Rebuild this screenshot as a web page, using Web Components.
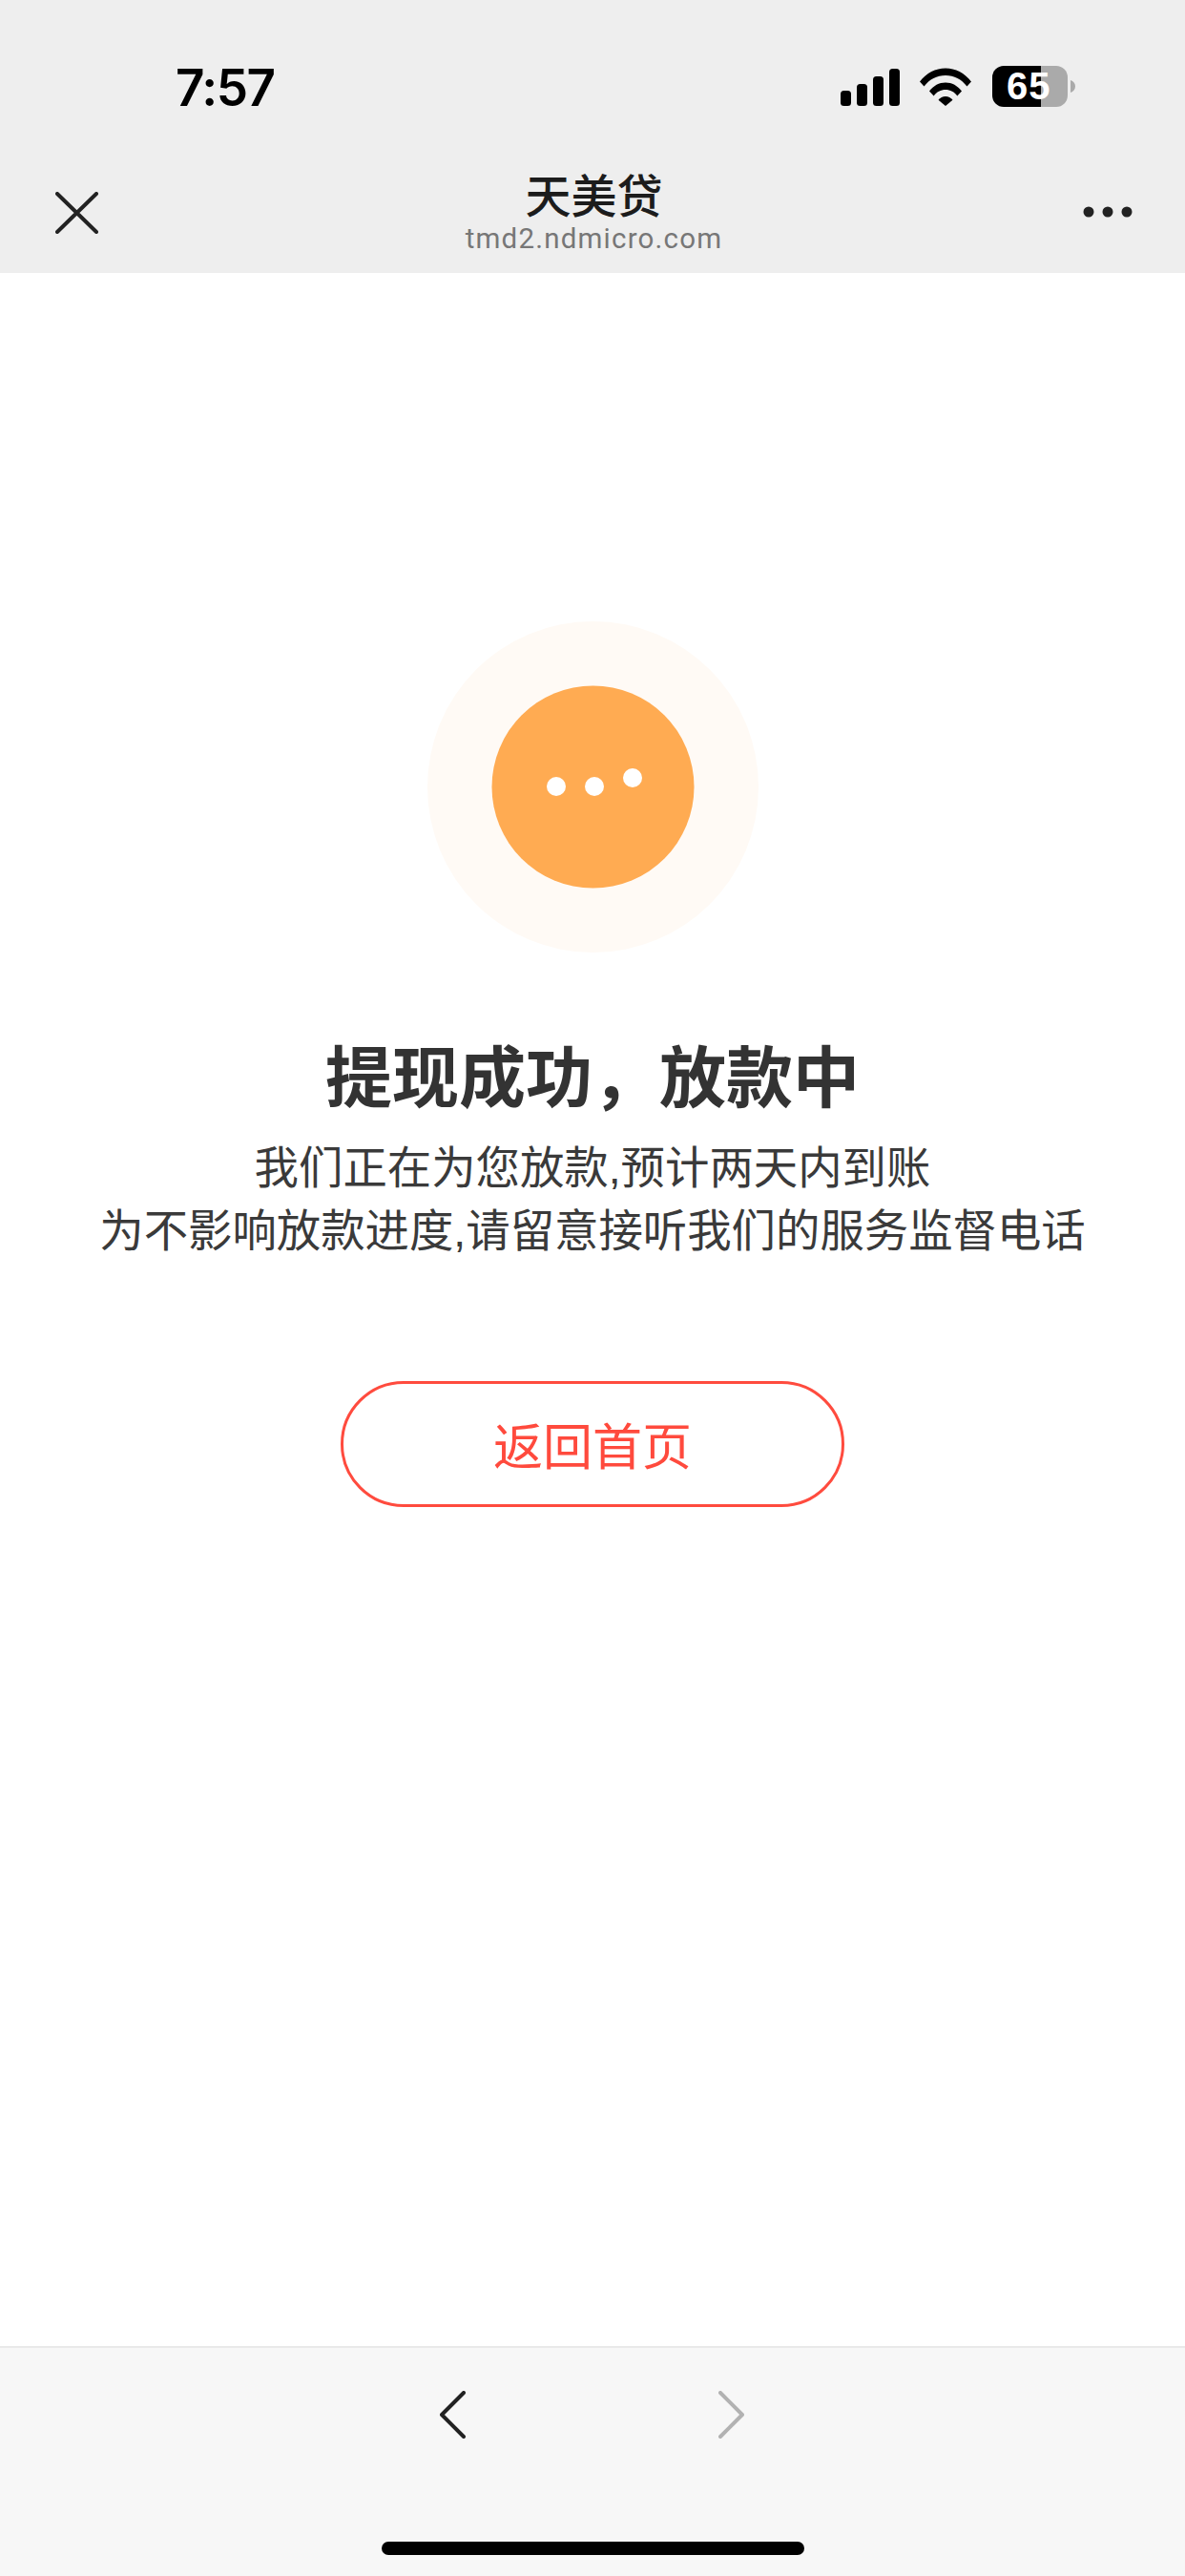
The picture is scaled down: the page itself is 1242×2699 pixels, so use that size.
<!DOCTYPE html>
<html lang="zh-CN">
<head>
<meta charset="utf-8">
<title>天美贷</title>
<style>
    html, body {
        margin: 0;
        padding: 0;
        background: #ffffff;
    }
    body {
        width: 1242px;
        height: 2699px;
        display: flex;
        flex-direction: column;
        font-family: "Liberation Sans", "Noto Sans CJK SC", sans-serif;
    }
</style>
</head>
<body>
<status-bar time="7:57" battery="65"></status-bar>
<web-nav title="天美贷" url="tmd2.ndmicro.com"></web-nav>
<result-page>
    <pending-badge></pending-badge>
    <span slot="title">提现成功&#xFF0C;放款中</span>
    <span slot="desc">我们正在为您放款,预计两天内到账</span>
    <span slot="desc">为不影响放款进度,请留意接听我们的服务监督电话</span>
    <outline-button slot="action">返回首页</outline-button>
</result-page>
<browser-toolbar></browser-toolbar>

<script>
class StatusBar extends HTMLElement {
    constructor() {
        super();
        this.attachShadow({ mode: 'open' });
    }

    connectedCallback() {
        this.render();
    }

    render() {
        const time = this.getAttribute('time');
        const battery = this.getAttribute('battery');

        this.shadowRoot.innerHTML = `
            <style>
                :host {
                    display: flex;
                    justify-content: space-between;
                    align-items: flex-start;
                    height: 150px;
                    box-sizing: border-box;
                    padding: 64px 115px 0 184px;
                    background: #eeeeee;
                }
                .time {
                    font: 600 53px/56px "Inter", "Liberation Sans", sans-serif;
                    letter-spacing: -1.5px;
                    color: #000000;
                }
                .icons {
                    display: flex;
                    align-items: flex-start;
                    margin-top: 5px;
                }
                .signal { margin: 3px 21px 0 0; }
                .wifi { margin: 2px 22px 0 0; }
                .battery {
                    width: 79px;
                    height: 43px;
                    border-radius: 12px;
                    background: linear-gradient(90deg, #000000 51px, #aaaaaa 51px);
                    color: #ffffff;
                    font: 700 40px/43px "Liberation Sans", sans-serif;
                    letter-spacing: 1px;
                    padding-left: 15px;
                    box-sizing: border-box;
                }
                .nub { margin: 15px 0 0 3px; }
            </style>
            <div class="time">${time}</div>
            <div class="icons">
                <svg class="signal" width="62" height="39" viewBox="0 0 62 39" fill="#000000">
                    <rect x="0" y="23" width="11" height="16" rx="3.5"/>
                    <rect x="17" y="16" width="11" height="23" rx="3.5"/>
                    <rect x="34" y="8" width="11" height="31" rx="3.5"/>
                    <rect x="51" y="0" width="11" height="39" rx="3.5"/>
                </svg>
                <svg class="wifi" width="54" height="40" viewBox="0 0 54 40" fill="#000000">
                    <path d="M0 14.500C7.200 5.400 16.500 0.500 27 0.500C37.500 0.500 46.800 5.400 54 14.500L49.500 19.500C43.800 12.100 36 8 27 8C18 8 10.200 12.100 4.500 19.500Z"/>
                    <path d="M10 24.500C14.300 18.800 20.300 15.500 27 15.500C33.700 15.500 39.700 18.800 44 24.500L39.300 29.400C36.300 25.400 32 23 27 23C22 23 17.700 25.400 14.700 29.400Z"/>
                    <path d="M19.500 33.800C21.400 31.400 24 30 27 30C30 30 32.600 31.400 34.500 33.800L27 40Z"/>
                </svg>
                <div class="battery">${battery}</div>
                <svg class="nub" width="5" height="13" viewBox="0 0 5 13" fill="#aaaaaa">
                    <path d="M0 0C3 1 5 3.500 5 6.500C5 9.500 3 12 0 13Z"/>
                </svg>
            </div>
        `;
    }
}

class WebNav extends HTMLElement {
    constructor() {
        super();
        this.attachShadow({ mode: 'open' });
    }

    connectedCallback() {
        this.render();
    }

    render() {
        const title = this.getAttribute('title');
        const url = this.getAttribute('url');

        this.shadowRoot.innerHTML = `
            <style>
                :host {
                    display: grid;
                    grid-template-columns: 1fr auto 1fr;
                    height: 136px;
                    box-sizing: border-box;
                    padding: 24px 55px 0 58px;
                    background: #eeeeee;
                }
                .close { margin-top: 27px; }
                .center { text-align: center; }
                .title {
                    font: 500 48px/56px "Noto Sans CJK SC", sans-serif;
                    color: #1c1c1c;
                }
                .url {
                    font: 400 29.500px/30px "Roboto", "Liberation Sans", sans-serif;
                    letter-spacing: 1.200px;
                    color: #777777;
                    margin-top: 5px;
                }
                .more {
                    justify-self: end;
                    margin-top: 42px;
                }
            </style>
            <svg class="close" width="45" height="44" viewBox="0 0 45 44" fill="none" stroke="#222222" stroke-width="4" stroke-linecap="round">
                <path d="M2 2L43 42M43 2L2 42"/>
            </svg>
            <div class="center">
                <div class="title">${title}</div>
                <div class="url">${url}</div>
            </div>
            <svg class="more" width="52" height="12" viewBox="0 0 52 12" fill="#222222">
                <circle cx="6" cy="6" r="5.500"/>
                <circle cx="26" cy="6" r="5.500"/>
                <circle cx="46" cy="6" r="5.500"/>
            </svg>
        `;
    }
}

class PendingBadge extends HTMLElement {
    constructor() {
        super();
        this.attachShadow({ mode: 'open' });
    }

    connectedCallback() {
        this.shadowRoot.innerHTML = `
            <style>
                :host {
                    display: block;
                    width: 347px;
                    height: 347px;
                }
                svg { display: block; }
            </style>
            <svg width="347" height="347" viewBox="0 0 347 347">
                <circle cx="173.500" cy="173.500" r="173.500" fill="#fffaf5"/>
                <circle cx="173.500" cy="173.500" r="106" fill="#ffab52"/>
                <circle cx="135" cy="173" r="10" fill="#ffffff"/>
                <circle cx="175" cy="173" r="10" fill="#ffffff"/>
                <circle cx="215" cy="164" r="10" fill="#ffffff"/>
            </svg>
        `;
    }
}

class OutlineButton extends HTMLElement {
    constructor() {
        super();
        this.attachShadow({ mode: 'open' });
    }

    connectedCallback() {
        this.shadowRoot.innerHTML = `
            <style>
                :host {
                    display: flex;
                    justify-content: center;
                    align-items: center;
                    width: 528px;
                    height: 132px;
                    box-sizing: border-box;
                    border: 3px solid #ff4b3e;
                    border-radius: 66px;
                    color: #ff4a3d;
                    font: 400 52px/60px "Noto Sans CJK SC", sans-serif;
                }
            </style>
            <slot></slot>
        `;
    }
}

class ResultPage extends HTMLElement {
    constructor() {
        super();
        this.attachShadow({ mode: 'open' });
    }

    connectedCallback() {
        this.shadowRoot.innerHTML = `
            <style>
                :host {
                    display: flex;
                    flex-direction: column;
                    align-items: center;
                    flex: 1;
                    padding-top: 365px;
                    background: #ffffff;
                    font-family: "Liberation Sans", "Noto Sans CJK SC", sans-serif;
                }
                .title {
                    margin-top: 85px;
                    font-size: 70px;
                    line-height: 96px;
                    font-weight: 600;
                    color: #333333;
                }
                .desc {
                    display: flex;
                    flex-direction: column;
                    align-items: center;
                    margin-top: 12px;
                    font-size: 46.400px;
                    line-height: 66px;
                    color: #3a3a3a;
                }
                .action { margin-top: 124px; }
            </style>
            <slot></slot>
            <div class="title"><slot name="title"></slot></div>
            <div class="desc"><slot name="desc"></slot></div>
            <div class="action"><slot name="action"></slot></div>
        `;
    }
}

class BrowserToolbar extends HTMLElement {
    constructor() {
        super();
        this.attachShadow({ mode: 'open' });
    }

    connectedCallback() {
        this.shadowRoot.innerHTML = `
            <style>
                :host {
                    display: flex;
                    flex-direction: column;
                    align-items: center;
                    height: 241px;
                    box-sizing: border-box;
                    padding-top: 45px;
                    background: #f7f7f7;
                    border-top: 2px solid #e9e9e9;
                }
                .arrows {
                    display: flex;
                    gap: 265px;
                    margin-left: -2px;
                }
                .home {
                    width: 443px;
                    height: 14px;
                    margin-top: 108px;
                    border-radius: 7px;
                    background: #000000;
                }
            </style>
            <div class="arrows">
                <svg width="27" height="50" viewBox="0 0 27 50" fill="none" stroke="#222222" stroke-width="4" stroke-linecap="round" stroke-linejoin="round">
                    <path d="M25 2L2 25L25 48"/>
                </svg>
                <svg width="27" height="50" viewBox="0 0 27 50" fill="none" stroke="#b2b2b2" stroke-width="4" stroke-linecap="round" stroke-linejoin="round">
                    <path d="M2 2L25 25L2 48"/>
                </svg>
            </div>
            <div class="home"></div>
        `;
    }
}

customElements.define('status-bar', StatusBar);
customElements.define('web-nav', WebNav);
customElements.define('pending-badge', PendingBadge);
customElements.define('outline-button', OutlineButton);
customElements.define('result-page', ResultPage);
customElements.define('browser-toolbar', BrowserToolbar);
</script>
</body>
</html>
